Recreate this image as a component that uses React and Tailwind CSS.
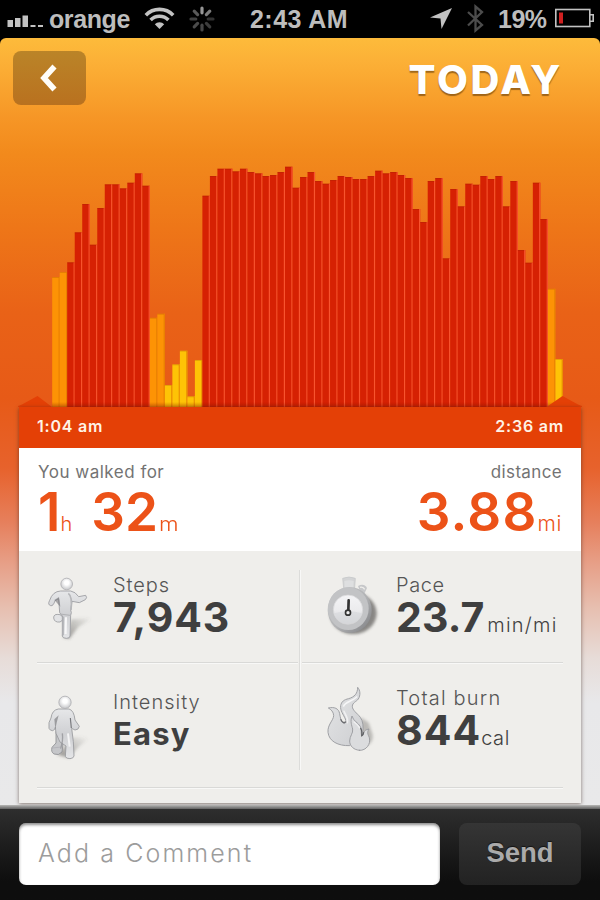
const RED = "#d62103";
const ORANGE = "#fd9305";
const YELLOW = "#fec306";

// Top edge of every activity bar, in chart pixels from the top of the screen.
const TOPS = [
  277, 272, 262.3, 232.3, 204, 244.7, 208, 184.3, 184.3, 188.3, 182.7, 173.3, 185.7,
  317.7, 313.7, 385, 364.3, 350.7, 396.3, 360,
  195.7, 176, 168.7, 168.7, 171.3, 168.7, 172, 173.3, 176, 175, 172, 166.7, 187.7,
  177, 172, 181, 183.7, 180, 176, 177, 179, 179, 176, 170.7, 173.3, 172,
  175, 178, 209, 222, 181, 178, 258.3, 189, 206.3, 183.7, 184.7, 176, 179, 176,
  206.3, 181, 250, 262.7, 182.7, 219, 288.7, 359,
];
const START = 52.2;
const PITCH = 7.51;

function barColor(i) {
  if ([0, 1, 13, 14, 66].includes(i)) return ORANGE;
  if ((i >= 15 && i <= 19) || i === 67) return YELLOW;
  return RED;
}

function ActivityChart() {
  return (
    <svg className="block shrink-0" width="600" height="289" viewBox="0 118 600 289">
      <defs>
        <linearGradient id="base" x1="0" y1="0" x2="0" y2="1">
          <stop offset="0" stopColor="#8a1400" stopOpacity="0" />
          <stop offset="1" stopColor="#8a1400" stopOpacity="0.35" />
        </linearGradient>
      </defs>
      {TOPS.map((top, i) => {
        const c = barColor(i);
        const x = START + i * PITCH;
        return (
          <g key={i}>
            <rect x={x} y={top} width={PITCH} height={407 - top} fill={c} />
            <rect
              x={x + PITCH - 1.2}
              y={top}
              width="1.2"
              height={407 - top}
              fill={c === RED ? "#fc5a34" : "#e07a00"}
              opacity={c === RED ? 0.9 : 0.7}
            />
            <rect x={x} y={top} width={PITCH - 1} height="1" fill="#7a2000" opacity="0.18" />
          </g>
        );
      })}
      <rect x="52" y="402" width="510" height="5" fill="url(#base)" />
      <path d="M18 407V406L22 404.5L37.5 396L52 407Z" fill="#e44006" />
      <path d="M546.5 407L562.5 396L578 404.5L582 406V407Z" fill="#e44006" />
    </svg>
  );
}

function StatusBar() {
  return (
    <div className="flex h-[38px] shrink-0 items-center bg-black font-['Liberation_Sans',Arial,sans-serif] text-[25px] leading-[38px] font-bold text-[#bdbdbd]">
      <svg className="ml-[7px] shrink-0" width="37" height="38" fill="#c2c2c2">
        <rect x="0.5" y="20" width="5.5" height="7" />
        <rect x="8" y="18" width="5.5" height="9" />
        <rect x="15.5" y="15.5" width="5.5" height="11.500" />
        <rect x="23.500" y="25" width="5" height="2" />
        <rect x="31" y="25" width="5" height="2" />
      </svg>
      <span className="ml-[5px] w-[82px] tracking-[-0.4px] whitespace-nowrap">orange</span>
      <svg className="ml-[13px] shrink-0" width="31" height="38" viewBox="144 0 31 38" fill="none" stroke="#c2c2c2">
        <path d="M145.800 15.200A19 19 0 0 1 173.200 15.200" strokeWidth="3.6" />
        <path d="M150.600 20A12.500 12.500 0 0 1 168.400 20" strokeWidth="3.6" />
        <path d="M159.500 29L154.800 24.300A6.600 6.600 0 0 1 164.200 24.300Z" fill="#c2c2c2" stroke="none" />
      </svg>
      <svg className="ml-[13px] shrink-0" width="28" height="38" viewBox="-14 -19 28 38" strokeWidth="3.2" strokeLinecap="round">
        {[150, 125, 50, 60, 70, 75, 65, 90].map((v, i) => (
          <line key={i} x1="0" y1="-6.200" x2="0" y2="-11" stroke={`rgb(${v},${v},${v})`} transform={`rotate(${i * 45})`} />
        ))}
      </svg>
      <span className="ml-[34px] w-[99px] tracking-[0.45px] whitespace-nowrap">2:43 AM</span>
      <svg className="ml-[81px] shrink-0" width="22" height="38" viewBox="430 0 22 38">
        <path d="M452 8L441.500 29L440.500 18.500L430 17.500Z" fill="#c2c2c2" />
      </svg>
      <svg className="ml-[15px] shrink-0" width="18" height="38" viewBox="467 0 18 38" fill="none" stroke="#4c4c4c" strokeWidth="2.300">
        <path d="M468 12L482 25L475.500 30.500V6.500L482 12L468 25.500" />
      </svg>
      <span className="ml-[13px] w-[51px] tracking-[-0.5px] whitespace-nowrap">19%</span>
      <svg className="ml-[5px] shrink-0" width="40" height="38" viewBox="554 0 40 38" fill="none" stroke="#c2c2c2" strokeWidth="1.600">
        <rect x="555.800" y="9.500" width="34" height="17" />
        <path d="M590 14.800H593.200V21.200H590" />
        <rect x="559" y="12.500" width="4" height="11" fill="#d02020" stroke="none" />
      </svg>
    </div>
  );
}

function FigureDefs() {
  return (
    <svg className="absolute" width="0" height="0">
      <defs>
        <linearGradient id="skin" x1="0" y1="0" x2="0" y2="1">
          <stop offset="0" stopColor="#e6e7e9" />
          <stop offset="0.5" stopColor="#cfd0d3" />
          <stop offset="1" stopColor="#e4e5e7" />
        </linearGradient>
        <radialGradient id="ball" cx="0.5" cy="0.4" r="0.6">
          <stop offset="0.3" stopColor="#ffffff" />
          <stop offset="1" stopColor="#c4c5c8" />
        </radialGradient>
        <linearGradient id="cast" x1="0" y1="1" x2="1" y2="0.2">
          <stop offset="0" stopColor="#55534f" stopOpacity="0.6" />
          <stop offset="1" stopColor="#55534f" stopOpacity="0" />
        </linearGradient>
        <linearGradient id="dial" x1="0" y1="0" x2="1" y2="1">
          <stop offset="0" stopColor="#cbccce" />
          <stop offset="0.55" stopColor="#b0b1b3" />
          <stop offset="1" stopColor="#7c7d80" />
        </linearGradient>
        <linearGradient id="face" x1="0" y1="0" x2="0" y2="1">
          <stop offset="0" stopColor="#f4f4f6" />
          <stop offset="0.5" stopColor="#ececee" />
          <stop offset="1" stopColor="#d3d4d6" />
        </linearGradient>
        <linearGradient id="flame" x1="0" y1="0" x2="1" y2="1">
          <stop offset="0" stopColor="#e4e5e6" />
          <stop offset="1" stopColor="#cdced1" />
        </linearGradient>
        <filter id="soft" x="-40%" y="-40%" width="180%" height="180%">
          <feGaussianBlur stdDeviation="5" />
        </filter>
      </defs>
    </svg>
  );
}

function StepsIcon() {
  return (
    <svg width="55" height="70" viewBox="129 39 165 210" strokeLinejoin="round">
      <path d="M190 232L214 178L285 172L236 200L208 236Z" fill="url(#cast)" filter="url(#soft)" />
      <path d="M180 164Q160 160 161 174Q163 188 180 186Q188 184 190 172Z" fill="#e2e3e5" stroke="#9b9ca0" strokeWidth="2.500" />
      <path d="M182 93Q158 94 149 121Q142 134 152 137Q160 139 165 122L176 116L179 158L187 168L187 228Q188 235 199 235Q210 235 210 228L212 166Q216 158 212 150L216 124L238 128L256 119Q263 113 257 106L236 110Q226 95 212 93Z" fill="url(#skin)" stroke="#98999d" strokeWidth="2.500" />
      <path d="M163 120L177 111L181 140Z" fill="#6e6e72" opacity="0.55" />
      <path d="M205 100Q218 110 213 150" fill="none" stroke="#b6b7ba" strokeWidth="5" />
      <path d="M190 170L190 226M180 162L210 166" fill="none" stroke="#b0b1b5" strokeWidth="3" />
      <path d="M198 172L197 222" stroke="#f7f7f8" strokeWidth="6" />
      <circle cx="200" cy="72" r="17.500" fill="url(#ball)" stroke="#aeafb2" strokeWidth="2.500" />
    </svg>
  );
}

function IntensityIcon() {
  return (
    <svg width="55" height="70" viewBox="129 399 165 210" strokeLinejoin="round">
      <path d="M172 584L216 532L275 530L236 560L206 594Z" fill="url(#cast)" filter="url(#soft)" />
      <path d="M168 515L168 549L156 562Q152 576 162 582Q176 588 186 576L190 545Z" fill="#c5c6c9" stroke="#8d8e92" strokeWidth="2.500" />
      <path d="M175 447Q156 450 153 474L147 488L147 505Q150 512 158 512Q165 510 166 502L168 520L180 546L198 558L196 590Q200 596 210 596Q221 595 222 588L220 545L215 505L225 510Q236 510 238 499L225 480Q222 451 207 447Z" fill="url(#skin)" stroke="#96979b" strokeWidth="2.500" />
      <path d="M163 478L176 466L170 488L166 508Z" fill="#717175" opacity="0.6" />
      <path d="M187 520Q190 540 182 566" fill="none" stroke="#8b8c90" strokeWidth="4" opacity="0.7" />
      <path d="M211 474L214 504" stroke="#77787c" strokeWidth="3.500" />
      <path d="M204 520L209 560" stroke="#f3f3f4" strokeWidth="6" />
      <path d="M157 564L184 561" stroke="#aaaab0" strokeWidth="2" />
      <circle cx="195" cy="427" r="18.500" fill="url(#ball)" stroke="#aeafb2" strokeWidth="2.500" />
    </svg>
  );
}

function PaceIcon() {
  return (
    <svg width="60" height="68" viewBox="72 36 180 204">
      <ellipse cx="160" cy="160" rx="70" ry="62" fill="#45433f" opacity="0.6" filter="url(#soft)" />
      <path d="M128 55Q147 47 166 55L164 84H131Z" fill="#d3d4d5" stroke="#c3c4c5" strokeWidth="2" />
      <path d="M133 63Q147 58 161 63L160 84H134Z" fill="#dedfe0" />
      <path d="M174 78Q192 68 201 84L193 101L180 94Z" fill="#c6c7c9" />
      <path d="M180 82Q190 80 194 88" fill="none" stroke="#efeeeb" strokeWidth="4" />
      <ellipse cx="149" cy="150" rx="66" ry="69" fill="url(#dial)" />
      <ellipse cx="145" cy="146" rx="61" ry="64" fill="#c2c3c5" />
      <circle cx="144" cy="149" r="44" fill="url(#face)" stroke="#d6d7d8" strokeWidth="2" />
      <path d="M103 160Q144 148 186 160Q176 192 144 192Q112 192 103 160Z" fill="#d6d7da" opacity="0.6" />
      <path d="M146 121L145 151" stroke="#343434" strokeWidth="8" strokeLinecap="round" />
      <circle cx="144" cy="158" r="7.500" fill="#eeeeef" stroke="#343434" strokeWidth="5" />
    </svg>
  );
}

function BurnIcon() {
  return (
    <svg width="56" height="72" viewBox="12 12 168 216" strokeLinejoin="round" strokeLinecap="round" stroke="#9a9b9f" strokeWidth="2.800">
      <path d="M118 200Q160 200 158 165L146 128L122 112Z" fill="#6e6c68" opacity="0.4" stroke="none" filter="url(#soft)" />
      <path d="M88 197C54 198 27 184 24 157C22 134 40 122 41 107C41 96 33 88 25 84C43 80 56 85 59 101C61 111 62 124 70 130C76 133 80 127 76 117C70 103 60 92 62 77C64 65 72 59 86 56C103 51 113 41 113 22C121 31 122 46 115 57C109 65 97 68 97 79C97 91 111 99 121 112C129 123 131 140 128 160L100 180Z" fill="url(#flame)" />
      <path d="M71 78C75 66 96 64 110 51" fill="none" stroke="#f6f6f7" strokeWidth="5" />
      <path d="M72 94C76 105 85 112 82 128" fill="none" stroke="#f0f0f1" strokeWidth="5" />
      <path d="M63 119Q68 131 77 126" fill="none" stroke="#6a6b6f" strokeWidth="4" />
      <path d="M119 211C101 210 89 198 89 183C89 168 100 160 98 147C95 136 90 124 96 108C100 123 114 128 121 139C126 148 122 158 125 168C132 164 128 150 147 147C140 157 144 164 148 173C153 192 139 212 119 211Z" fill="#dbdcde" />
      <path d="M102 126Q113 133 119 144" fill="none" stroke="#f0f0f1" strokeWidth="4" />
      <path d="M122 145Q127 152 125 168Q130 166 131 158" fill="none" stroke="#5f6064" strokeWidth="3.500" />
    </svg>
  );
}

const LABEL = "text-[20px] leading-[24px] font-light text-[#555555]";
const VALUE = "text-[41px] leading-[40px]";

function Divider() {
  return <div className="h-[2px] shrink-0 border-b border-[#f8f8f7] bg-[#d9d9d7]" />;
}

export default function App() {
  return (
    <div className="relative flex h-[900px] w-[600px] flex-col overflow-hidden bg-black font-['Inter','Open_Sans',sans-serif]">
      <FigureDefs />
      <StatusBar />

      <main className="flex h-[767px] shrink-0 flex-col overflow-hidden rounded-t-[6px] bg-[linear-gradient(180deg,#fdbb3b_0px,#fcb137_22px,#f69626_80px,#f28a1c_115px,#ee7618_190px,#e96217_275px,#e75a17_360px,#e7622c_430px,#e6805d_485px,#e79f87_525px,#e7bfb0_570px,#e7dcd8_620px,#e8e8ea_665px,#e9e9ea_767px)]">
        <header className="flex h-[80px] shrink-0 items-start justify-between pr-[37px] pl-[13px]">
          <button className="mt-[13px] flex h-[54px] w-[73px] items-center justify-center rounded-[8px] bg-gradient-to-b from-[#ba8428] to-[#b9711f]">
            <svg width="20" height="28" viewBox="0 0 20 28" fill="none" stroke="#fffdf8" strokeWidth="5.600">
              <path d="M14.500 2.500L4 14L14.500 25.500" />
            </svg>
          </button>
          <h1 className="mt-[22px] text-[40px] leading-[40px] font-extrabold tracking-[2.6px] text-white [text-shadow:0_2px_1px_rgba(100,60,10,0.6)]">
            TODAY
          </h1>
        </header>

        <ActivityChart />

        <section className="mx-[19px] flex h-[396px] w-[562px] shrink-0 flex-col bg-[#efeeeb] shadow-[0_1px_4px_rgba(60,40,30,0.6)]">
          <div className="flex h-[41px] shrink-0 justify-between bg-[#e44006] px-[18px] text-[16px] leading-[39px] font-semibold tracking-[0.8px] text-[#fff3e6]">
            <span>1:04 am</span>
            <span className="-mr-[1px]">2:36 am</span>
          </div>

          <div className="flex h-[103px] shrink-0 justify-between bg-white px-[19px] text-[#ec5218]">
            <div>
              <div className="mt-[13px] text-[17px] leading-[22px] tracking-[0.5px] text-[#737373]">You walked for</div>
              <div className="mt-[2px] text-[53px] leading-[54px] font-semibold whitespace-pre">
                <span>1</span>
                <span className="text-[20px] font-light">h</span>
                <span className="ml-[19px]">32</span>
                <span className="ml-px inline-block origin-left scale-x-112 text-[20px] font-light">m</span>
              </div>
            </div>
            <div className="text-right">
              <div className="mt-[13px] text-[17px] leading-[22px] tracking-[0.35px] text-[#737373]">distance</div>
              <div className="mt-[2px] text-[53px] leading-[54px] font-semibold tracking-[1.2px] whitespace-nowrap">
                3.88<span className="text-[21px] font-light tracking-[0.6px]">mi</span>
              </div>
            </div>
          </div>

          <div className="flex h-[236px] shrink-0 px-[18px] text-[#3f3f3f]">
            <div className="flex w-[261px] flex-col">
              <div className="flex h-[111px] shrink-0">
                <div className="w-[76px] shrink-0 pt-[22px] pl-[6px]"><StepsIcon /></div>
                <div>
                  <div className={`mt-[22px] tracking-[0.9px] ${LABEL}`}>Steps</div>
                  <div className={`font-bold tracking-[0.9px] ${VALUE}`}>7,943</div>
                </div>
              </div>
              <Divider />
              <div className="flex h-[123px] shrink-0">
                <div className="w-[76px] shrink-0 pt-[29px] pl-[6px]"><IntensityIcon /></div>
                <div>
                  <div className={`mt-[26px] tracking-[1px] ${LABEL}`}>Intensity</div>
                  <div className="text-[31px] leading-[40px] font-bold tracking-[1.2px]">Easy</div>
                </div>
              </div>
            </div>
            <div className="mx-[1px] mt-[19px] h-[200px] w-[2px] border-r border-[#f8f8f7] bg-[#dcdcda]" />
            <div className="flex w-[261px] flex-col">
              <div className="flex h-[111px] shrink-0">
                <div className="w-[94px] shrink-0 pt-[21px] pl-[22px]"><PaceIcon /></div>
                <div className="whitespace-nowrap">
                  <div className={`mt-[22px] tracking-[0.6px] ${LABEL}`}>Pace</div>
                  <div className={`font-bold tracking-[0.1px] ${VALUE}`}>
                    23.7<span className="ml-[3px] text-[20px] font-light tracking-[1.2px]">min/mi</span>
                  </div>
                </div>
              </div>
              <Divider />
              <div className="flex h-[123px] shrink-0">
                <div className="w-[94px] shrink-0 pt-[20px] pl-[22px]"><BurnIcon /></div>
                <div className="whitespace-nowrap">
                  <div className={`mt-[22px] tracking-[1.2px] ${LABEL}`}>Total burn</div>
                  <div className={`font-bold tracking-[1px] ${VALUE}`}>
                    844<span className="text-[20px] font-light tracking-[0.6px]">cal</span>
                  </div>
                </div>
              </div>
            </div>
          </div>
          <div className="mx-[18px]"><Divider /></div>
        </section>
      </main>

      <footer className="flex h-[95px] shrink-0 flex-col bg-gradient-to-b from-[#2e2e2e] from-5% to-[#0e0e0e] to-80%">
        <div className="h-[4px] shrink-0 bg-gradient-to-b from-[#b8b8b6] to-[#626262]" />
        <div className="flex pt-[14px] pl-[19px]">
          <input
            className="h-[62px] w-[421px] rounded-[7px] bg-white px-[19px] pb-[3px] text-[25px] font-light tracking-[2.1px] shadow-[inset_0_2px_3px_rgba(0,0,0,0.45)] placeholder:text-[#9c9c9c] placeholder:opacity-100"
            placeholder="Add a Comment"
          />
          <button className="ml-[19px] h-[62px] w-[122px] rounded-[8px] bg-gradient-to-b from-[#353535] to-[#222222] pb-[2px] font-['Liberation_Sans',Arial,sans-serif] text-[27.500px] font-bold text-[#aaaaaa] [text-shadow:0_-1px_1px_rgba(0,0,0,0.6)]">
            Send
          </button>
        </div>
      </footer>
    </div>
  );
}
